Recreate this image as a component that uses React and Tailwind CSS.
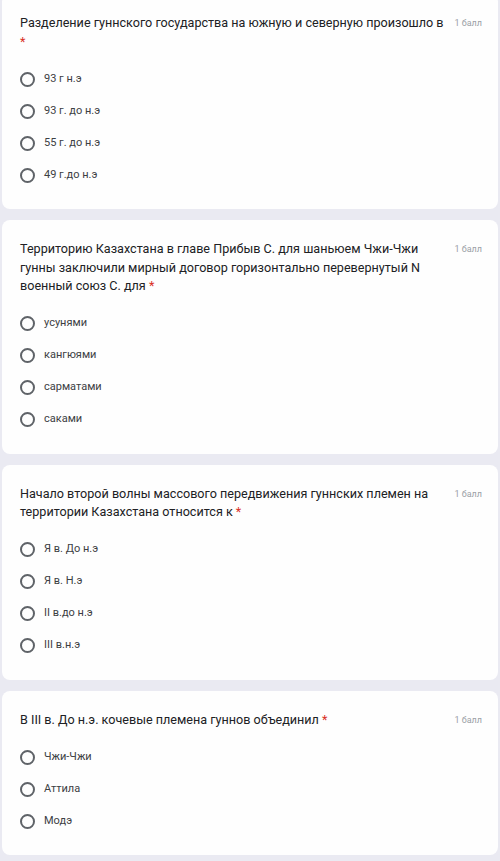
const questions = [
  {
    text: 'Разделение гуннского государства на южную и северную произошло в',
    options: ['93 г н.э', '93 г. до н.э', '55 г. до н.э', '49 г.до н.э'],
  },
  {
    text: 'Территорию Казахстана в главе Прибыв С. для шаньюем Чжи-Чжи гунны заключили мирный договор горизонтально перевернутый N военный союз С. для',
    options: ['усунями', 'кангюями', 'сарматами', 'саками'],
  },
  {
    text: 'Начало второй волны массового передвижения гуннских племен на территории Казахстана относится к',
    options: ['Я в. До н.э', 'Я в. Н.э', 'II в.до н.э', 'III в.н.э'],
  },
  {
    text: 'В III в. До н.э. кочевые племена гуннов объединил',
    options: ['Чжи-Чжи', 'Аттила', 'Модэ'],
  },
]

function Radio() {
  return <span className="w-[15px] h-[15px] rounded-full border-2 border-[#5f6368] shrink-0" />
}

function QuestionCard({ q }) {
  return (
    <div className="bg-[#fefefe] rounded-lg pl-[18px] pr-[16px] pt-[20px] pb-[18px]">
      <div className="flex items-start gap-[3px]">
        <p className="flex-1 text-[12.6px] leading-[18.5px] text-[#202124]">
          {q.text} <span className="text-[#d93025]">*</span>
        </p>
        <span className="w-[30px] shrink-0 text-[9px] leading-[18.5px] text-[#9aa0a6] text-right">1 балл</span>
      </div>
      <div className="mt-[12px]">
        {q.options.map(opt => (
          <div key={opt} className="h-[32px] flex items-center gap-[9px]">
            <Radio />
            <span className="text-[11px] text-[#3c4043]">{opt}</span>
          </div>
        ))}
      </div>
    </div>
  )
}

export default function App() {
  return (
    <div className="min-h-[861px] bg-[#eaeaf2] overflow-hidden" style={{ fontFamily: 'Roboto, "Noto Sans", sans-serif' }}>
      <div className="-mt-[6px] px-[2px] flex flex-col gap-[11px]">
        {questions.map((q, i) => (
          <QuestionCard key={i} q={q} />
        ))}
      </div>
    </div>
  )
}
